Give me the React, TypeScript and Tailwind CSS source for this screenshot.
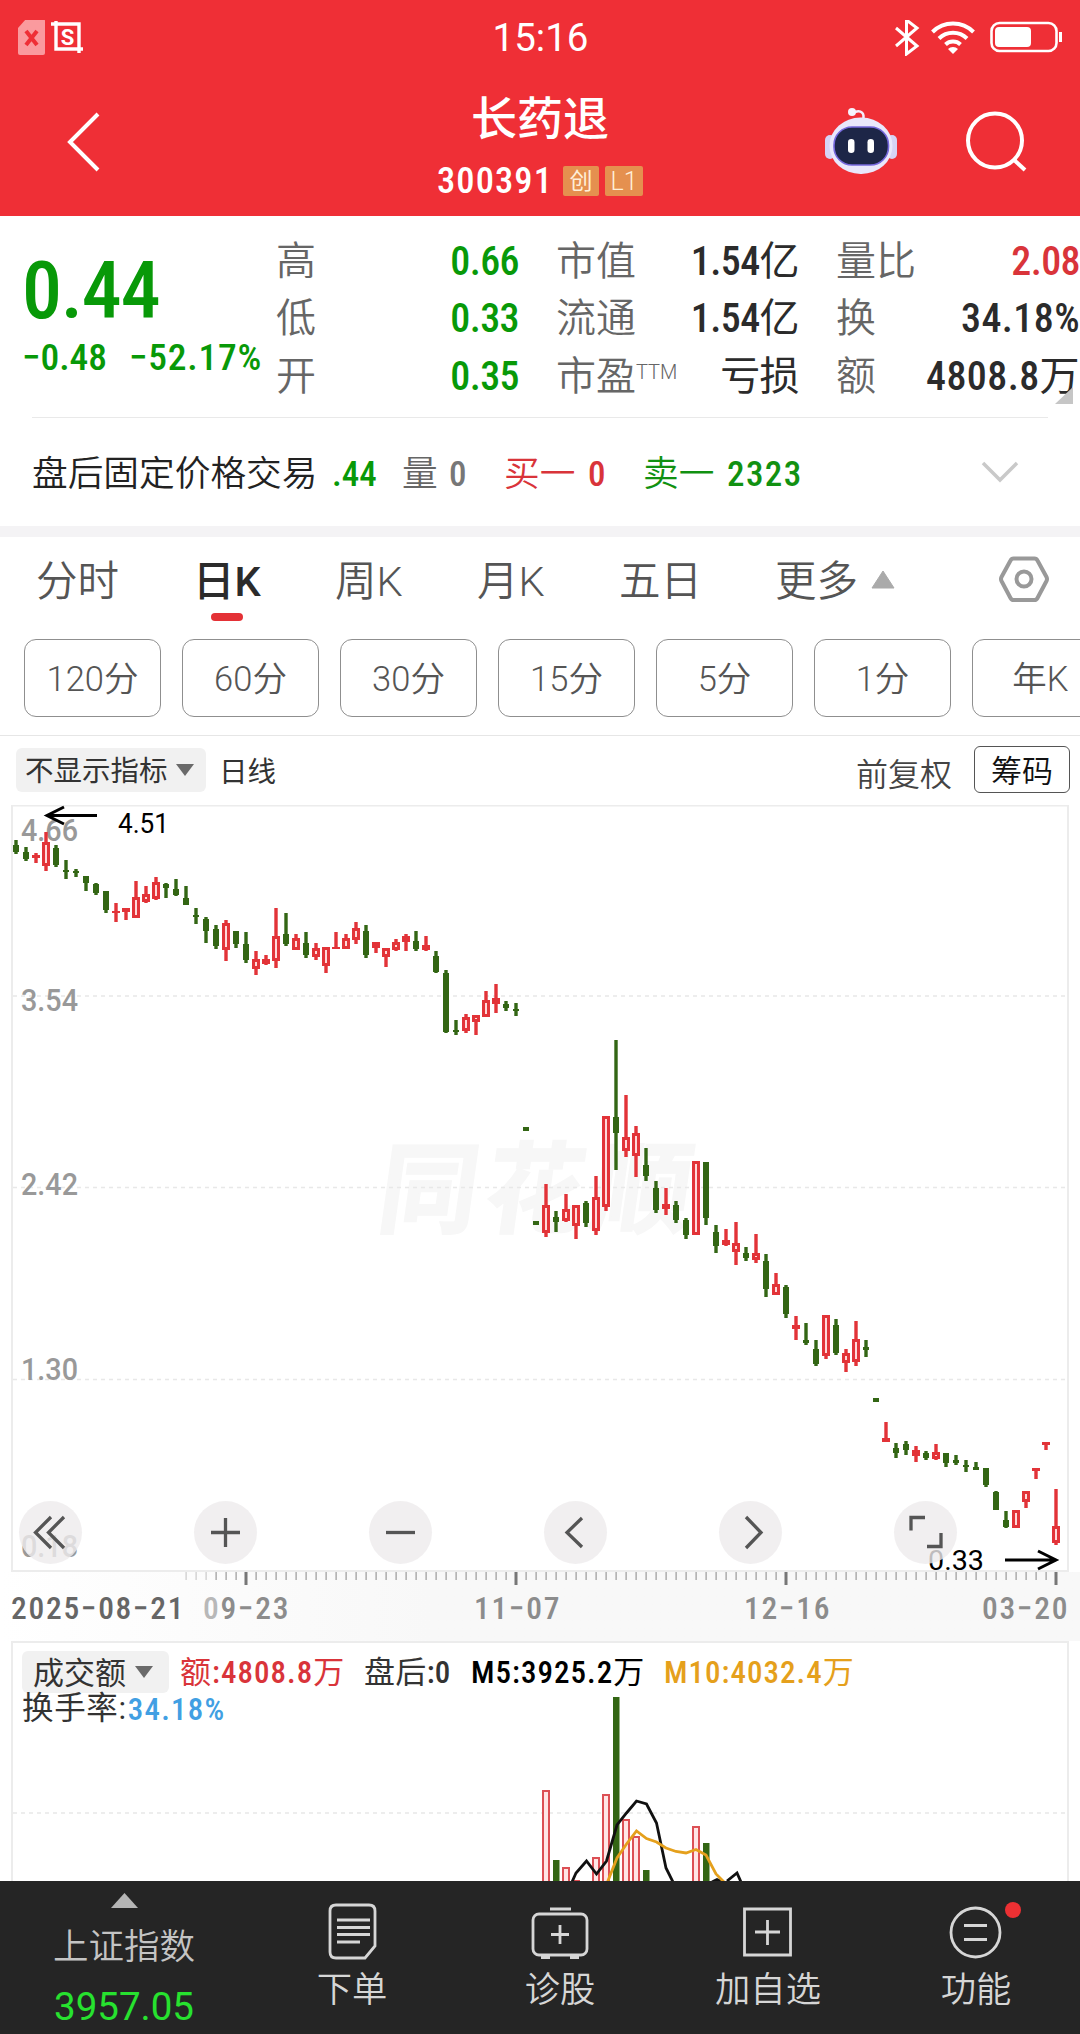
import React from 'react';
import clsx from 'clsx';

type Candle = [color: 'r' | 'g', high: number, top: number, bottom: number, low: number];

// One entry per trading day, pixel rows inside the chart
const candles: Candle[] = [
    ['g', 840, 845, 852, 854], ['g', 847, 852, 859, 861], ['r', 853, 855, 858, 863], ['r', 832, 842, 866, 871],
    ['g', 845, 848, 865, 867], ['g', 860, 870, 872, 879], ['g', 869, 871, 873, 877], ['g', 876, 876, 883, 891],
    ['g', 883, 884, 893, 895], ['g', 891, 891, 910, 913], ['r', 903, 911, 913, 922], ['r', 908, 908, 912, 920],
    ['r', 881, 897, 918, 918], ['r', 886, 894, 902, 903], ['r', 877, 882, 899, 900], ['g', 883, 884, 888, 898],
    ['g', 879, 889, 895, 896], ['g', 886, 898, 905, 905], ['g', 908, 915, 917, 924], ['g', 917, 919, 931, 943],
    ['g', 925, 929, 946, 949], ['r', 920, 923, 950, 961], ['g', 931, 931, 944, 948], ['g', 932, 944, 960, 963],
    ['r', 951, 959, 969, 975], ['r', 955, 959, 964, 965], ['r', 908, 936, 961, 968], ['g', 913, 934, 944, 946],
    ['r', 934, 938, 950, 950], ['g', 932, 943, 955, 958], ['r', 943, 948, 957, 960], ['r', 947, 947, 966, 973],
    ['r', 932, 947, 949, 949], ['r', 934, 938, 949, 949], ['r', 922, 928, 940, 944], ['g', 925, 931, 955, 958],
    ['r', 942, 942, 948, 953], ['r', 948, 948, 957, 967], ['r', 939, 942, 950, 951], ['r', 934, 936, 942, 951],
    ['g', 931, 941, 949, 951], ['r', 936, 945, 950, 951], ['g', 951, 956, 972, 973], ['g', 970, 973, 1032, 1033],
    ['g', 1020, 1030, 1032, 1035], ['r', 1014, 1017, 1031, 1033], ['r', 1015, 1015, 1022, 1035], ['r', 991, 1000, 1017, 1017],
    ['r', 984, 998, 1004, 1013], ['g', 1001, 1004, 1008, 1011], ['g', 1003, 1009, 1011, 1016], ['g', 1127, 1127, 1131, 1131],
    ['g', 1221, 1221, 1225, 1225], ['r', 1184, 1205, 1233, 1237], ['g', 1211, 1217, 1222, 1232], ['r', 1194, 1209, 1221, 1222],
    ['r', 1205, 1205, 1226, 1239], ['g', 1201, 1203, 1223, 1227], ['r', 1176, 1197, 1231, 1235], ['r', 1116, 1116, 1207, 1211],
    ['g', 1040, 1117, 1133, 1170], ['r', 1095, 1137, 1151, 1157], ['r', 1126, 1133, 1156, 1177], ['g', 1148, 1165, 1176, 1181],
    ['g', 1181, 1188, 1210, 1213], ['r', 1188, 1204, 1209, 1215], ['g', 1201, 1205, 1220, 1223], ['g', 1218, 1220, 1235, 1239],
    ['r', 1161, 1161, 1235, 1235], ['g', 1162, 1162, 1218, 1225], ['g', 1225, 1232, 1246, 1253], ['r', 1229, 1240, 1245, 1246],
    ['r', 1222, 1243, 1252, 1265], ['g', 1247, 1253, 1258, 1261], ['r', 1234, 1253, 1260, 1263], ['g', 1254, 1261, 1289, 1297],
    ['r', 1273, 1284, 1295, 1295], ['g', 1285, 1287, 1314, 1318], ['r', 1316, 1325, 1329, 1340], ['g', 1323, 1340, 1343, 1345],
    ['g', 1340, 1349, 1364, 1366], ['r', 1315, 1315, 1356, 1359], ['g', 1319, 1325, 1353, 1355], ['r', 1349, 1353, 1363, 1372],
    ['r', 1321, 1339, 1362, 1366], ['g', 1340, 1347, 1350, 1357], ['g', 1398, 1398, 1402, 1402], ['r', 1422, 1438, 1442, 1442],
    ['g', 1443, 1448, 1453, 1458], ['g', 1441, 1444, 1450, 1455], ['r', 1446, 1450, 1456, 1462], ['g', 1451, 1453, 1458, 1460],
    ['r', 1444, 1452, 1459, 1460], ['g', 1453, 1453, 1463, 1467], ['g', 1455, 1460, 1463, 1465], ['g', 1460, 1465, 1467, 1472],
    ['g', 1462, 1467, 1470, 1470], ['g', 1468, 1468, 1485, 1487], ['g', 1491, 1492, 1510, 1510], ['g', 1511, 1520, 1527, 1528],
    ['r', 1510, 1510, 1528, 1528], ['r', 1491, 1491, 1502, 1508], ['r', 1468, 1468, 1471, 1479], ['r', 1442, 1442, 1445, 1450],
    ['r', 1489, 1526, 1543, 1545],
];

const volumes: { day: number; top: number; color: 'r' | 'g' }[] = [
    { day: 53, top: 1790, color: 'r' },
    { day: 54, top: 1860, color: 'g' },
    { day: 55, top: 1867, color: 'r' },
    { day: 56, top: 1880, color: 'r' },
    { day: 58, top: 1857, color: 'r' },
    { day: 59, top: 1794, color: 'r' },
    { day: 60, top: 1697, color: 'g' },
    { day: 61, top: 1819, color: 'r' },
    { day: 62, top: 1836, color: 'r' },
    { day: 63, top: 1870, color: 'g' },
    { day: 68, top: 1826, color: 'r' },
    { day: 69, top: 1843, color: 'g' },
];

const RED = '#e23338';
const GREEN = '#336614';
const dayX = (i: number) => 16 + i * 10;

// Narrow digits, Chinese characters stay at the regular weight
const Din: React.FC<{ className?: string; children: string }> = ({ className, children }) => (
    <span className={clsx('font-medium [font-stretch:75%]', className)}>
        {children.split(/([\u4e00-\u9fff]+)/).map((part, i) =>
            i % 2 ? <span key={i} className="font-normal">{part}</span> : part
        )}
    </span>
);

const StatusBar = () => (
    <div className="flex h-[75px] items-center justify-between pr-[17px] pl-[18px]">
        <svg className="h-9 w-[66px]" viewBox="18 19 66 36" fill="none">
            <path d="M26 18h17a2 2 0 0 1 2 2v32a2 2 0 0 1-2 2H20a2 2 0 0 1-2-2V27z" fill="#fa9a9e" />
            <path d="M26 30l11 14M37 30l-11 14" stroke="#ef2f36" strokeWidth="4" />
            <path d="M56 20v28h27M51 23h28v29" stroke="#fff" strokeWidth="3.4" />
            <text x="67.500" y="44" fontSize="22" fontWeight="700" textAnchor="middle" fill="#fff">S</text>
        </svg>
        <div className="ml-[102px] pt-px text-[38.500px] leading-none">15:16</div>
        <svg className="h-9 w-[168px]" viewBox="895 19 168 36" fill="none" stroke="#fff">
            <path d="M896 27l21 18-10.500 8V19l10.500 8-21 18" strokeWidth="3" />
            <path d="M932.500 31a29 29 0 0 1 41 0M939 37.500a20 20 0 0 1 28 0M945.500 43.500a11 11 0 0 1 15 0" strokeWidth="4" />
            <path d="M953 53l-5-5a7 7 0 0 1 10 0z" fill="#fff" stroke="none" />
            <rect x="991.500" y="22" width="65" height="28" rx="8" strokeWidth="2.600" />
            <rect x="995" y="26" width="36" height="20" rx="4" fill="#fff" stroke="none" />
            <path d="M1060.500 31v10" strokeWidth="3" />
        </svg>
    </div>
);

const Robot = () => (
    <svg className="h-[68px] w-[76px]" viewBox="823 107 76 68">
        <path d="M863 120c2-7-2-10-8-8" fill="none" stroke="#f3eefc" strokeWidth="2.500" />
        <circle cx="852" cy="112" r="4" fill="#f6f3fd" />
        <rect x="825" y="135" width="10" height="24" rx="5" fill="#d6d3f5" />
        <rect x="887" y="135" width="10" height="24" rx="5" fill="#d6d3f5" />
        <rect x="829.500" y="117.500" width="63" height="56.500" rx="31" ry="28" fill="#e9e7fb" />
        <rect x="834" y="127" width="54.500" height="38" rx="18" fill="#1d2647" stroke="#7568dc" strokeWidth="1.600" />
        <rect x="848" y="139" width="6.500" height="14" rx="3.200" fill="#fff" />
        <rect x="867.500" y="139" width="6.500" height="14" rx="3.200" fill="#fff" />
    </svg>
);

const TitleBar = () => (
    <div className="flex h-[141px] items-start">
        <button className="ml-[66px] pt-[36px]">
            <svg className="h-[62px] w-9" viewBox="66 111 36 62" fill="none" stroke="#fff" strokeWidth="4">
                <path d="M98 114L70 142l28 28" />
            </svg>
        </button>
        <div className="ml-[273px] flex w-[330px] flex-col items-center">
            <h1 className="mt-[19px] text-[46px] leading-[50px] font-medium">长药退</h1>
            <div className="mt-[17px] flex h-10 items-center gap-1.5 text-[23px] leading-none">
                <Din className="mr-[4px] text-[36.500px] tracking-[0.03em]">300391</Din>
                <span className="flex h-[30px] w-9 items-center justify-center rounded-xs bg-[#e5904f] text-[#ffeed8]">创</span>
                <span className="flex h-[30px] w-[38px] items-center justify-center rounded-xs bg-[#e5904f] text-[25px] font-light text-[#ffeed8]">L1</span>
            </div>
        </div>
        <div className="mr-[51px] ml-auto flex items-center gap-[64px] pt-[32px]">
            <Robot />
            <svg className="h-[64px] w-[66px]" viewBox="963 111 66 64" fill="none" stroke="#fff" strokeWidth="4">
                <circle cx="995" cy="142.500" r="27" />
                <path d="M1013 161l12 11" />
            </svg>
        </div>
    </div>
);

const StatColumn: React.FC<{
    className: string;
    rows: { label: React.ReactNode; value: string; color: string }[];
}> = ({ className, rows }) => (
    <dl className={className}>
        {rows.map(({ label, value, color }, i) => (
            <div key={i} className="flex h-[57.5px] items-center justify-between whitespace-nowrap">
                <dt className="text-[40px] font-[350] text-[#666]">{label}</dt>
                <dd className={color}>
                    <Din className={clsx('text-[40px]', value.length > 5 ? 'tracking-[0.01em]' : 'tracking-[-0.015em]')}>{value}</Din>
                </dd>
            </div>
        ))}
    </dl>
);

const Quote = () => (
    <section className="h-[310px]">
        <div className="relative flex h-[201px] pt-[17px]">
            <div className="w-[276px] pl-[22px] text-[#089908]">
                <div className="mt-[21px] h-[75px] text-[80px] leading-[75px]">
                    <Din className="tracking-[-0.015em]">0.44</Din>
                </div>
                <div className="mt-px flex h-[54px] items-center gap-[22px] text-[37.500px] whitespace-nowrap">
                    <Din>−0.48</Din>
                    <Din className="tracking-[0.02em]">−52.17%</Din>
                </div>
            </div>
            <StatColumn
                className="w-[243px]"
                rows={[
                    { label: '高', value: '0.66', color: 'text-[#089908]' },
                    { label: '低', value: '0.33', color: 'text-[#089908]' },
                    { label: '开', value: '0.35', color: 'text-[#089908]' },
                ]}
            />
            <StatColumn
                className="ml-[37px] w-[243px]"
                rows={[
                    { label: '市值', value: '1.54亿', color: 'text-[#2b2b2b]' },
                    { label: '流通', value: '1.54亿', color: 'text-[#2b2b2b]' },
                    { label: <>市盈<span className="relative -top-[11px] text-[20px]">TTM</span></>, value: '亏损', color: 'text-[#2b2b2b]' },
                ]}
            />
            <StatColumn
                className="ml-[37px] w-[244px]"
                rows={[
                    { label: '量比', value: '2.08', color: 'text-[#d9343a]' },
                    { label: '换', value: '34.18%', color: 'text-[#2b2b2b]' },
                    { label: '额', value: '4808.8万', color: 'text-[#2b2b2b]' },
                ]}
            />
            <svg className="absolute right-[7px] bottom-[13px] h-[17px] w-[18px]" viewBox="0 0 18 17">
                <path d="M18 0v17H0z" fill="#c6c6c6" />
            </svg>
        </div>
        <div className="mr-8 ml-8 flex h-[109px] items-center border-t border-[#e9e9e9] pt-1.5 text-[35.700px] font-[350] whitespace-nowrap text-[#222]">
            <span className="w-[300px]">盘后固定价格交易</span>
            <Din className="w-[70px] text-[35px] text-[#089908]">.44</Din>
            <span className="w-[47px] text-[#666]">量</span>
            <Din className="w-[55px] text-[35px] text-[#777]">0</Din>
            <span className="w-[84px] text-[#d9343a]">买一</span>
            <Din className="w-[55px] text-[35px] text-[#d9343a]">0</Din>
            <span className="w-[84px] text-[#119111]">卖一</span>
            <Din className="text-[35px] tracking-[0.04em] text-[#119111]">2323</Din>
            <svg className="-mt-1.5 mr-[29px] ml-auto h-6 w-[38px]" viewBox="0 0 38 24" fill="none" stroke="#c9c9c9" strokeWidth="3.500">
                <path d="M2 3l17 17L36 3" />
            </svg>
        </div>
    </section>
);

const PeriodTabs = () => (
    <nav className="relative flex h-[87px] items-center pt-[4px] text-[41.500px] font-[350] whitespace-nowrap text-[#555]">
        <span className="ml-[36px] w-[157px]">分时</span>
        <span className="w-[142px] font-medium text-[#2b2b2b]">日K</span>
        <span className="w-[142px]">周K</span>
        <span className="w-[142px]">月K</span>
        <span className="w-[156px]">五日</span>
        <span>更多</span>
        <svg className="-mt-[7px] ml-[13px] h-[19px] w-6" viewBox="0 0 24 19">
            <path d="M12 1L23 18H1z" fill="#aaa" stroke="#aaa" strokeLinejoin="round" />
        </svg>
        <svg className="-mt-[7px] mr-[30px] ml-auto h-12 w-[52px]" viewBox="998 555 52 48" fill="none" stroke="#999" strokeWidth="4">
            <path d="M1013.500 558.500h21q2 0 3 2l9 16.500q1 2 0 4l-9 17q-1 2-3 2h-21q-2 0-3-2l-9-17q-1-2 0-4l9-16.500q1-2 3-2z" />
            <circle cx="1024" cy="579" r="7.500" />
        </svg>
        <i className="absolute bottom-[3px] left-[211px] h-2 w-8 rounded-full bg-[#e43136]" />
    </nav>
);

const minutes = ['120分', '60分', '30分', '15分', '5分', '1分', '年K'];

const MinuteChips = () => (
    <div className="flex h-[112px] gap-[21px] overflow-hidden border-b border-[#e6e6e6] pt-[15px] pl-6">
        {minutes.map((m) => (
            <button key={m} className="h-[78px] w-[137px] shrink-0 rounded-xl border border-[#8f8f8f] pt-[4px] text-[34.500px] font-[350] text-[#555]">
                {m}
            </button>
        ))}
    </div>
);

const Caret = () => (
    <svg className="h-3 w-[18px]" viewBox="0 0 18 12">
        <path d="M0 0h18L9 12z" fill="#6a6a6a" />
    </svg>
);

const IndicatorBar = () => (
    <div className="flex h-[69px] items-start pt-[10px] text-[28.500px] whitespace-nowrap text-[#333]">
        <button className="mt-[2px] ml-4 flex h-[44px] w-[190px] items-center gap-2 rounded-md bg-[#f1f1f1] pl-[9px]">
            <span className="pt-[4px]">不显示指标</span>
            <Caret />
        </button>
        <span className="ml-[13px] flex h-[54px] items-center">日线</span>
        <span className="mr-[22px] ml-auto flex h-[58px] items-center text-[32px] font-[350] text-[#444]">前复权</span>
        <button className="mr-[10px] h-[47px] w-[96px] rounded-md border border-[#555] pt-[3px] text-[31px] leading-none font-[350] text-[#111]">筹码</button>
    </div>
);

const zoomIcons = [
    'M33 17L17.500 32.500 33 48M46 17L30.500 32.500 46 48',
    'M18 32.500h29M32.500 18v29',
    'M18 32.500h29',
    'M39 18L24 32.500 39 47',
    'M28 17l15 15.500L28 48',
    'M18 30.500V17.500H32M48 33V46.500H34',
];

const KLineChart = () => (
    <div className="relative h-[767px]">
        <svg className="h-[782px] w-full" viewBox="0 805 1080 782">
            <text transform="translate(375 1225) skewX(-8)" fontSize="99" fontWeight="700" textLength="312" fill="#f7f7f7" stroke="#f7f7f7" strokeWidth="2">同花顺</text>
            <rect x="12" y="805.500" width="1056" height="765.500" fill="none" stroke="#ececec" strokeWidth="2" />
            {[996, 1187.5, 1379.5].map((y) => (
                <path key={y} d={`M13 ${y}H1067`} stroke="#e8e8e8" strokeWidth="1.500" strokeDasharray="4 4" />
            ))}
            {[
                ['4.66', 841],
                ['3.54', 1011],
                ['2.42', 1195],
                ['1.30', 1380],
                ['0.18', 1557],
            ].map(([label, y]) => (
                <text key={label} x="21" y={y} fontSize="30.500" fontWeight="500" textLength="57" lengthAdjust="spacingAndGlyphs" fill="#999">{label}</text>
            ))}
            {candles.map(([color, high, top, bottom, low], i) => {
                const x = dayX(i);
                if (color === 'g') {
                    return (
                        <g key={i} fill={GREEN}>
                            <rect x={x - 1.7} y={high} width="3.400" height={low - high} />
                            <rect x={x - 3} y={top} width="6" height={bottom - top} />
                        </g>
                    );
                }
                return (
                    <g key={i}>
                        <rect x={x - 1.7} y={high} width="3.400" height={low - high} fill={RED} />
                        <rect x={x - 4} y={top} width="8" height={bottom - top} fill={RED} />
                        {bottom - top > 6 && <rect x={x - 1} y={top + 3} width="2" height={bottom - top - 6} fill="#ffd9d9" />}
                    </g>
                );
            })}
            <g fill="none" stroke="#000" strokeWidth="3">
                <path d="M97 815.500H47M64 807l-17 8.500 17 8.500" />
                <path d="M1005 1560h50M1038 1551l18 9-18 9" />
            </g>
            <text x="118" y="832.500" fontSize="27" textLength="51" lengthAdjust="spacingAndGlyphs">4.51</text>
            <text x="928" y="1570" fontSize="27" textLength="56" lengthAdjust="spacingAndGlyphs">0.33</text>
        </svg>
        <div className="absolute top-[696px] left-[19px] flex gap-[112px]">
            {zoomIcons.map((d) => (
                <button key={d} className="size-[63px] rounded-full bg-[#edebec]/80">
                    <svg className="size-full" viewBox="1 1 63 63" fill="none" stroke="#555" strokeWidth="3.300">
                        <path d={d} />
                    </svg>
                </button>
            ))}
        </div>
    </div>
);

const TimeAxis = () => (
    <div className="relative h-[69px] bg-linear-to-r from-white via-[#f8f8f8] via-40% to-[#f8f8f8] text-[31.500px] text-[#8c8c8c]">
        <svg className="absolute top-0 left-0 h-[13px] w-full" viewBox="0 1572 1080 13">
            {candles.map((_, i) => {
                const major = i === 23 || i === 50 || i === 77 || i === 104;
                if (i < 17) return null;
                return (
                    <rect key={i} x={dayX(i) - (major ? 1.5 : 0.5)} y="1572" width={major ? 3 : 1.2} height={major ? 13 : 8}
                        fill={major ? '#777' : '#999'} opacity={i < 20 ? 0.5 : 1} />
                );
            })}
        </svg>
        <div className="flex pt-[18px] leading-[38px] tracking-[0.055em] whitespace-nowrap">
            <Din className="ml-[11px] w-[192px] text-[#666]">2025−08−21</Din>
            <span className="w-[271px] font-medium [font-stretch:75%]"><span className="text-[#b8b8b8]">0</span>9−23</span>
            <Din className="w-[270px]">11−07</Din>
            <Din className="w-[238px]">12−16</Din>
            <Din>03−20</Din>
        </div>
    </div>
);

const VolumeChart = () => (
    <div className="relative h-[240px] overflow-hidden text-[31px] leading-none whitespace-nowrap text-[#333]">
        <svg className="absolute inset-0 h-full w-full" viewBox="0 1641 1080 240">
            <path d="M12 1900V1642H1068V1900" fill="none" stroke="#ececec" strokeWidth="2" />
            <path d="M13 1813H1067" stroke="#e8e8e8" strokeWidth="1.500" strokeDasharray="4 4" />
            {volumes.map(({ day, top, color }) =>
                color === 'g' ? (
                    <rect key={day} x={dayX(day) - 3} y={top} width="6.500" height={1890 - top} fill={GREEN} />
                ) : (
                    <rect key={day} x={dayX(day) - 3} y={top + 1} width="6" height={1890 - top} fill="#ffe6e6" stroke="#dc5055" strokeWidth="2" />
                )
            )}
            <path d="M572 1882L576 1873 586.500 1861 596.500 1874 606.500 1861 617 1825 626.500 1813 636.500 1801 646.500 1804 656.500 1823 666 1868 673 1882M712 1882L717 1879.500 723 1882M727 1881L737 1873 741 1882" fill="none" stroke="#111" strokeWidth="2.800" />
            <path d="M607.500 1882L617 1858 626.500 1844 636.500 1831 646.500 1838.500 656.500 1842 666 1848 676 1851.500 686 1853 696 1849.500 706 1855 716 1874 724 1882" fill="none" stroke="#e5a01c" strokeWidth="2.800" />
        </svg>
        <div className="relative mt-[10px] flex h-[42px] items-center pl-[22px] tracking-[0.033em]">
            <button className="flex h-[42px] w-[147px] items-center gap-[9px] rounded-md bg-[#f1f1f1] pl-[11px] tracking-normal">
                <span className="pt-0.5">成交额</span>
                <Caret />
            </button>
            <Din className="ml-[11px] w-[184px] text-[#d9343a]">额:4808.8万</Din>
            <Din className="w-[107px] tracking-[0.01em]">盘后:0</Din>
            <Din className="w-[193px] text-black">M5:3925.2万</Din>
            <Din className="text-[#e5a01c]">M10:4032.4万</Din>
        </div>
        <div className="relative flex h-[32px] items-center gap-px pl-[22px]">
            <span className="text-[31.500px] tracking-[0.02em]">换手率:</span>
            <Din className="tracking-[0.04em] text-[#419fe3]">34.18%</Din>
        </div>
    </div>
);

const navItems = [
    {
        label: '下单',
        icon: (
            <>
                <path d="M10 3h33q6 0 6 6v35L39 56H10q-6 0-6-6V9q0-6 6-6z" />
                <path d="M11 18h33M11 25.500h33M11 32.500h33M11 40h23" />
            </>
        ),
    },
    {
        label: '诊股',
        icon: (
            <>
                <rect x="-1" y="12" width="54" height="41" rx="6" />
                <path d="M16 7h21M26 23v19M17 32.500h18M7 55.500h9M36 55.500h9" />
            </>
        ),
    },
    {
        label: '加自选',
        icon: <path d="M2.500 7h46v46h-46zM25.500 18v25M13 30h25" />,
    },
    {
        label: '功能',
        icon: (
            <>
                <circle cx="25.500" cy="30.500" r="24.500" />
                <path d="M14 23.500h23M14 37.500h23" />
            </>
        ),
    },
];

const BottomNav = () => (
    <footer className="flex h-[153px] bg-[#252525] text-[35.300px] leading-none whitespace-nowrap text-[#d6d6d6]">
        <div className="flex w-[248px] flex-col items-center">
            <svg className="mt-3 h-[15px] w-[27px]" viewBox="0 0 27 15">
                <path d="M13.500 0L27 15H0z" fill="#b5b5b5" />
            </svg>
            <span className="mt-[22px] text-[35.500px] font-[350] text-[#c4c4c4]">上证指数</span>
            <span className="mt-[22px] text-[38.500px] text-[#27e22f]">3957.05</span>
        </div>
        {navItems.map(({ label, icon }) => (
            <div key={label} className="relative flex w-[208px] flex-col items-center">
                <svg className="mt-[21px] h-[60px] w-[60px]" viewBox="-4 0 60 60" fill="none" stroke="#d6d6d6" strokeWidth="2.800">
                    {icon}
                </svg>
                <span className="mt-[11px] font-[350]">{label}</span>
                {label === '功能' && <i className="absolute top-[21px] left-[133px] size-4 rounded-full bg-[#ec3033]" />}
            </div>
        ))}
    </footer>
);

const App = () => {
    return (
        <div className="flex h-[2034px] w-[1080px] flex-col overflow-hidden bg-white font-['Roboto','Noto_Sans_CJK_SC',sans-serif]">
            <header className="h-[216px] bg-[#ef2f36] text-white">
                <StatusBar />
                <TitleBar />
            </header>
            <Quote />
            <div className="h-[11px] bg-[#f4f3f5]" />
            <PeriodTabs />
            <MinuteChips />
            <IndicatorBar />
            <KLineChart />
            <TimeAxis />
            <VolumeChart />
            <BottomNav />
        </div>
    );
};

export default App;
